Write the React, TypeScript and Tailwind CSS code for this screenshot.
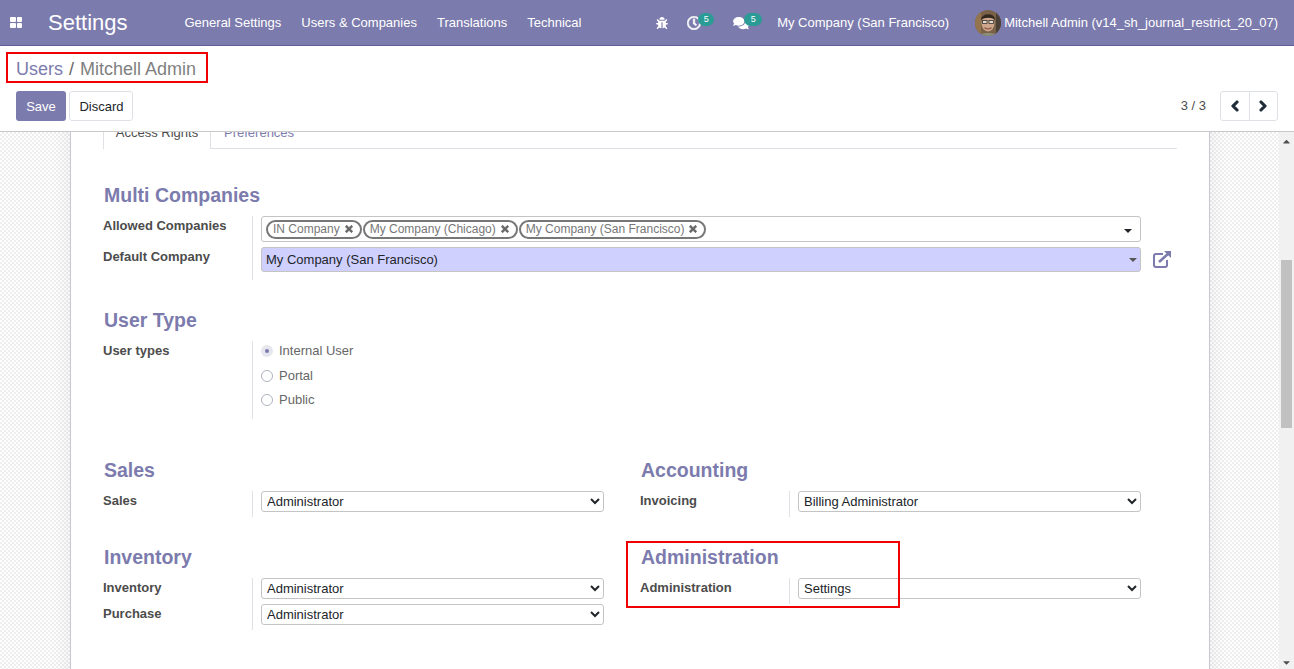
import React from "react";
import { FaBug, FaRegClock, FaComments, FaTimes, FaChevronLeft, FaChevronRight, FaCaretDown, FaCaretUp } from "react-icons/fa";

const font = "font-['Liberation_Sans',Arial,sans-serif]";

function Title({ children, className = "" }: { children: React.ReactNode; className?: string }) {
  return <div className={`h-6 pl-px text-[19.5px] leading-6 font-bold text-[#7c7bad] ${className}`}>{children}</div>;
}

function Label({ children }: { children: React.ReactNode }) {
  return <div className="-mt-px mb-px text-[13px] leading-[21px] font-bold text-[#4c4c4c]">{children}</div>;
}

function Sel({ value }: { value: string }) {
  return (
    <select
      defaultValue={value}
      className="block h-[21px] w-full rounded-[3px] border border-[#c4c4c4] bg-white pl-px text-[13px] text-[#212529]"
    >
      <option>{value}</option>
    </select>
  );
}

function SelectGroup({ title, rows }: { title: string; rows: [string, string][] }) {
  return (
    <div className="w-[501px]">
      <Title>{title}</Title>
      <div className="mt-[9px] flex">
        <div className="flex w-[150px] flex-col gap-[5px] border-r border-[#dee2e6] pb-[5px]">
          {rows.map(([l]) => (
            <Label key={l}>{l}</Label>
          ))}
        </div>
        <div className="flex flex-1 flex-col gap-[5px] pl-2">
          {rows.map(([l, v]) => (
            <Sel key={l} value={v} />
          ))}
        </div>
      </div>
    </div>
  );
}

function Tag({ children }: { children: React.ReactNode }) {
  return (
    <span className="flex h-[19px] items-center gap-1 rounded-full border-2 border-[#777] pr-[6px] pl-[5px] text-[12px] leading-none text-[#777]">
      {children}
      <FaTimes className="h-[10px] w-[10px] stroke-[50px] text-[#666]" />
    </span>
  );
}

function Caret({ className = "" }: { className?: string }) {
  return (
    <svg viewBox="0 0 8 4" className={`ml-auto h-1 w-2 ${className}`} fill="currentColor">
      <path d="M0 0h8L4 4z" />
    </svg>
  );
}

function Radio({ label, checked, className }: { label: string; checked?: boolean; className: string }) {
  return (
    <div className={`flex items-center gap-[6px] text-[13px] text-[#666] ${className}`}>
      {checked ? (
        <span className="flex h-3 w-3 items-center justify-center rounded-full bg-[#e6e6ee]">
          <span className="h-1 w-1 rounded-full bg-[#7c7bad]" />
        </span>
      ) : (
        <span className="h-3 w-3 rounded-full border border-[#adb5bd] bg-white" />
      )}
      {label}
    </div>
  );
}

function Badge({ className }: { className: string }) {
  return (
    <span className={`absolute -top-[3px] flex h-[13px] items-center justify-center rounded-full bg-[#2b9b96] text-[9px] leading-none text-white ${className}`}>
      5
    </span>
  );
}

function Avatar() {
  return (
    <svg viewBox="0 0 26 26" className="h-[26px] w-[26px] rounded-full">
      <rect width="26" height="26" fill="#7a6248" />
      <path d="M0 0h6v26H0z" fill="#94744d" />
      <path d="M21 0h5v26h-5z" fill="#4a4038" />
      <ellipse cx="13" cy="13" rx="6.5" ry="8.5" fill="#cfa68c" />
      <path d="M6 10c0-7 14-8 14 0-3-3-10-3-14 0z" fill="#33291f" />
      <rect x="7.5" y="10.5" width="4.5" height="3" fill="#e6d8cc" stroke="#333" strokeWidth="0.8" />
      <rect x="14" y="10.5" width="4.5" height="3" fill="#e6d8cc" stroke="#333" strokeWidth="0.8" />
      <path d="M9.5 17.5c2 1.6 5 1.6 7 0" stroke="#8c5a48" strokeWidth="1.2" fill="none" />
      <path d="M3 26c2-4 18-4 20 0z" fill="#8c9078" />
    </svg>
  );
}

export default function App() {
  return (
    <div className={`${font} flex h-[669px] w-[1294px] flex-col overflow-hidden bg-white`}>
      <header className="flex h-[46px] shrink-0 items-center border-b border-[#5f5e97] bg-[#7c7bad] text-[13px] text-white">
        <div className="ml-[10px] grid h-[11px] w-[12px] grid-cols-2 gap-px">
          <span className="rounded-[1px] bg-white" />
          <span className="rounded-[1px] bg-white" />
          <span className="rounded-[1px] bg-white" />
          <span className="rounded-[1px] bg-white" />
        </div>
        <div className="ml-[26px] text-[22px] leading-none">Settings</div>
        <nav className="ml-[57px] flex gap-5">
          <span>General Settings</span>
          <span>Users &amp; Companies</span>
          <span>Translations</span>
          <span>Technical</span>
        </nav>
        <div className="ml-auto flex items-center pr-4">
          <FaBug className="h-3 w-3" />
          <span className="relative ml-[19px] block h-[14px] w-[14px]">
            <FaRegClock className="h-[14px] w-[14px] stroke-[20px]" />
            <Badge className="left-[11px] w-[16px]" />
          </span>
          <span className="relative ml-[32px] block h-[14px] w-[16px]">
            <FaComments className="h-[14px] w-[16px]" />
            <Badge className="left-[11px] w-[18px]" />
          </span>
          <span className="ml-[28px]">My Company (San Francisco)</span>
          <span className="ml-[26px] flex items-center gap-[3px]">
            <Avatar />
            Mitchell Admin (v14_sh_journal_restrict_20_07)
          </span>
        </div>
      </header>

      <div className="relative h-[86px] shrink-0 border-b border-[#c9c9c9] bg-white">
        <div className="flex h-[45px] items-center pl-4 text-[18px] leading-none">
          <span className="text-[#7c7bad]">Users</span>
          <span className="mx-[6px] text-[#666]">/</span>
          <span className="text-[#7f7f7f]">Mitchell Admin</span>
        </div>
        <div className="flex items-center justify-between pr-4 pl-4">
          <div className="flex gap-[3px]">
            <button className="h-[30px] w-[50px] rounded-[3px] bg-[#7c7bad] pt-px text-[13px] text-white">Save</button>
            <button className="h-[30px] w-[64px] rounded-[3px] border border-[#dee2e6] bg-white pt-px pl-px text-[13px] text-[#212529]">
              Discard
            </button>
          </div>
          <div className="flex items-center">
            <span className="mr-[14px] text-[13px] text-[#4c4c4c]">3 / 3</span>
            <div className="flex h-[30px] w-[58px] rounded-[3px] border border-[#dee2e6] text-[#1f2a37]">
              <span className="flex flex-1 items-center justify-center border-r border-[#dee2e6]">
                <FaChevronLeft className="h-3 w-3 stroke-[50px]" />
              </span>
              <span className="flex flex-1 items-center justify-center">
                <FaChevronRight className="h-3 w-3 stroke-[50px]" />
              </span>
            </div>
          </div>
        </div>
        <div className="pointer-events-none absolute top-[6px] left-[6px] h-[31px] w-[202px] border-2 border-[#f00000]" />
      </div>

      <div className="relative flex min-h-0 flex-1">
        <div className="min-w-0 flex-1 overflow-hidden bg-[repeating-conic-gradient(#eeeeee_0_25%,#ffffff_0_50%)] bg-[length:4px_4px]">
          <div className="ml-[70px] h-[800px] w-[1140px] border-x border-[#c9c9d6] bg-white px-[32px] shadow-[0_0_20px_rgba(0,0,0,0.08)]">
            <div className="mt-[-23px] flex h-[40px] w-[1074px] border-b border-[#dee2e6] text-[13px]">
              <div className="mb-[-1px] flex h-[40px] w-[108px] items-center justify-center border-x border-[#dee2e6] bg-white pt-[8px] text-[#4c4c4c]">
                Access Rights
              </div>
              <div className="ml-[13px] flex items-center pt-[8px] text-[#7c7bad]">Preferences</div>
            </div>

            <Title className="mt-[34px]">Multi Companies</Title>
            <div className="mt-[9px] flex">
              <div className="flex w-[150px] flex-col border-r border-[#dee2e6] pb-[12px]">
                <Label>Allowed Companies</Label>
                <div className="mt-[10px]">
                  <Label>Default Company</Label>
                </div>
              </div>
              <div className="flex w-[888px] flex-col gap-[5px] pl-2">
                <div className="flex h-[26px] items-center gap-px rounded-[3px] border border-[#c4c4c4] bg-white pr-2 pl-1">
                  <Tag>IN Company</Tag>
                  <Tag>My Company (Chicago)</Tag>
                  <Tag>My Company (San Francisco)</Tag>
                  <Caret className="mt-[3px] text-[#212529]" />
                </div>
                <div className="flex h-[25px] items-center rounded-[3px] border border-[#c4c4c4] bg-[#d0d0ff] pr-[3px] pl-1 text-[13px] text-[#212529]">
                  My Company (San Francisco)
                  <Caret className="text-[#555]" />
                </div>
              </div>
              <svg viewBox="0 0 20 18" className="mt-[34px] ml-[11px] h-[18px] w-[20px] text-[#7c7bad]" fill="none" stroke="currentColor" strokeWidth="2">
                <path d="M11 4H4a2 2 0 0 0-2 2v9a2 2 0 0 0 2 2h9a2 2 0 0 0 2-2v-5" />
                <path d="M7 12 17 3" strokeWidth="2.6" />
                <path d="M12 1h7v7z" fill="currentColor" stroke="none" />
              </svg>
            </div>

            <Title className="mt-[28px]">User Type</Title>
            <div className="mt-[9px] flex">
              <div className="w-[150px] border-r border-[#dee2e6] pb-[57px]">
                <Label>User types</Label>
              </div>
              <div className="-mt-[3px] pl-2">
                <Radio label="Internal User" checked className="h-[25px]" />
                <Radio label="Portal" className="h-[25px]" />
                <Radio label="Public" className="h-6" />
              </div>
            </div>

            <div className="mt-[39px] flex flex-col gap-[28px]">
              <div className="flex gap-[36px]">
                <SelectGroup title="Sales" rows={[["Sales", "Administrator"]]} />
                <SelectGroup title="Accounting" rows={[["Invoicing", "Billing Administrator"]]} />
              </div>
              <div className="flex gap-[36px]">
                <SelectGroup
                  title="Inventory"
                  rows={[
                    ["Inventory", "Administrator"],
                    ["Purchase", "Administrator"],
                  ]}
                />
                <SelectGroup title="Administration" rows={[["Administration", "Settings"]]} />
              </div>
            </div>
          </div>
        </div>

        <div className="relative w-[15px] shrink-0 bg-[#f1f1f1]">
          <FaCaretUp className="absolute top-[4px] left-[2px] h-[11px] w-[11px] text-[#505050]" />
          <div className="absolute top-[128px] left-[2px] h-[168px] w-[11px] bg-[#c1c1c1]" />
          <FaCaretDown className="absolute bottom-[1px] left-[2px] h-[11px] w-[11px] text-[#505050]" />
        </div>

        <div className="pointer-events-none absolute top-[409px] left-[626px] h-[67px] w-[274px] border-2 border-[#f00000]" />
      </div>
    </div>
  );
}
